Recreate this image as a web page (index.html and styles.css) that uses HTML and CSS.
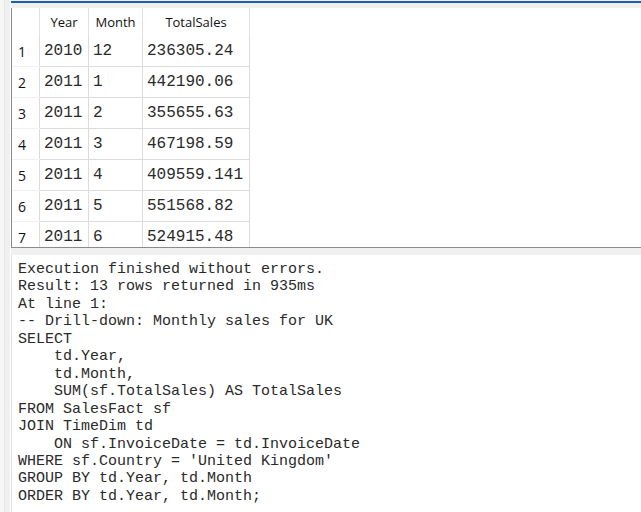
FILE: index.html
```html
<!DOCTYPE html>
<html>
<head>
<meta charset="utf-8">
<link rel="stylesheet" href="styles.css">
</head>
<body>
<div class="app">
  <div class="side"></div>
  <div class="main">
    <div class="topbar"></div>
    <div class="grid-pane">
      <table class="grid">
        <thead>
          <tr><th class="rn"></th><th class="c-year">Year</th><th class="c-month">Month</th><th class="c-total">TotalSales</th></tr>
        </thead>
        <tbody>
          <tr><td class="rn">1</td><td>2010</td><td>12</td><td>236305.24</td></tr>
          <tr><td class="rn">2</td><td>2011</td><td>1</td><td>442190.06</td></tr>
          <tr><td class="rn">3</td><td>2011</td><td>2</td><td>355655.63</td></tr>
          <tr><td class="rn">4</td><td>2011</td><td>3</td><td>467198.59</td></tr>
          <tr><td class="rn">5</td><td>2011</td><td>4</td><td>409559.141</td></tr>
          <tr><td class="rn">6</td><td>2011</td><td>5</td><td>551568.82</td></tr>
          <tr><td class="rn">7</td><td>2011</td><td>6</td><td>524915.48</td></tr>
        </tbody>
      </table>
    </div>
    <div class="splitter"></div>
    <pre class="messages">Execution finished without errors.
Result: 13 rows returned in 935ms
At line 1:
-- Drill-down: Monthly sales for UK
SELECT
    td.Year,
    td.Month,
    SUM(sf.TotalSales) AS TotalSales
FROM SalesFact sf
JOIN TimeDim td
    ON sf.InvoiceDate = td.InvoiceDate
WHERE sf.Country = 'United Kingdom'
GROUP BY td.Year, td.Month
ORDER BY td.Year, td.Month;</pre>
  </div>
</div>
</body>
</html>
```
FILE: styles.css
```css
html, body {
  margin: 0;
  padding: 0;
  background: #ffffff;
}
.app {
  display: flex;
  width: 641px;
  height: 512px;
  overflow: hidden;
}
.side {
  width: 5px;
  flex: 0 0 5px;
  background: #f7f7f7;
  border-right: 1px solid #e6e6e6;
  box-sizing: border-box;
  box-shadow: 5px 0 0 #f0f0f0;
  position: relative;
}
.main {
  flex: 1;
  margin-left: 6px;
  display: flex;
  flex-direction: column;
  min-width: 0;
}
.topbar {
  height: 8px;
  flex: 0 0 8px;
  box-sizing: border-box;
  border-top: 1px solid #f0f0f0;
  background: #f0f0f0;
}
.topbar::before {
  content: "";
  display: block;
  height: 2px;
  background: #1c5fad;
}
.grid-pane {
  height: 240px;
  flex: 0 0 240px;
  box-sizing: border-box;
  border-left: 1px solid #8a8a8a;
  border-bottom: 1px solid #8a8a8a;
  background: #ffffff;
  overflow: hidden;
}
.grid {
  border-collapse: collapse;
  table-layout: fixed;
  width: 237px;
}
.grid th {
  font-family: "Open Sans", "Noto Sans", sans-serif;
  font-weight: normal;
  font-size: 13px;
  color: #111;
  height: 28px;
  padding: 0;
  text-align: center;
  border-right: 1px solid #e2e2e2;
}
.grid th.rn { width: 27px; }
.grid th.c-year { width: 48px; }
.grid th.c-month { width: 53px; }
.grid th.c-total { width: 106px; }
.grid td {
  font-family: "Liberation Mono", "Courier New", monospace;
  font-size: 16px;
  color: #2a2a2a;
  height: 30px;
  padding: 0 0 0 4px;
  border-right: 1px solid #dcdcdc;
  border-bottom: 1px solid #dcdcdc;
  white-space: nowrap;
  overflow: hidden;
}
.grid td.rn {
  font-family: "Open Sans", "Noto Sans", sans-serif;
  font-size: 14px;
  padding-left: 6px;
  border-bottom: 1px solid #f0f0f0;
  color: #111;
}
.splitter {
  height: 7px;
  flex: 0 0 7px;
  background: #f0f0f0;
}
.messages {
  flex: 1;
  margin: 0;
  padding: 6px 0 0 6px;
  border-left: 1px solid #e0e0e0;
  font-family: "Liberation Mono", "Courier New", monospace;
  font-size: 15px;
  line-height: 17.46px;
  color: #2a2a2a;
  background: #ffffff;
}
```
